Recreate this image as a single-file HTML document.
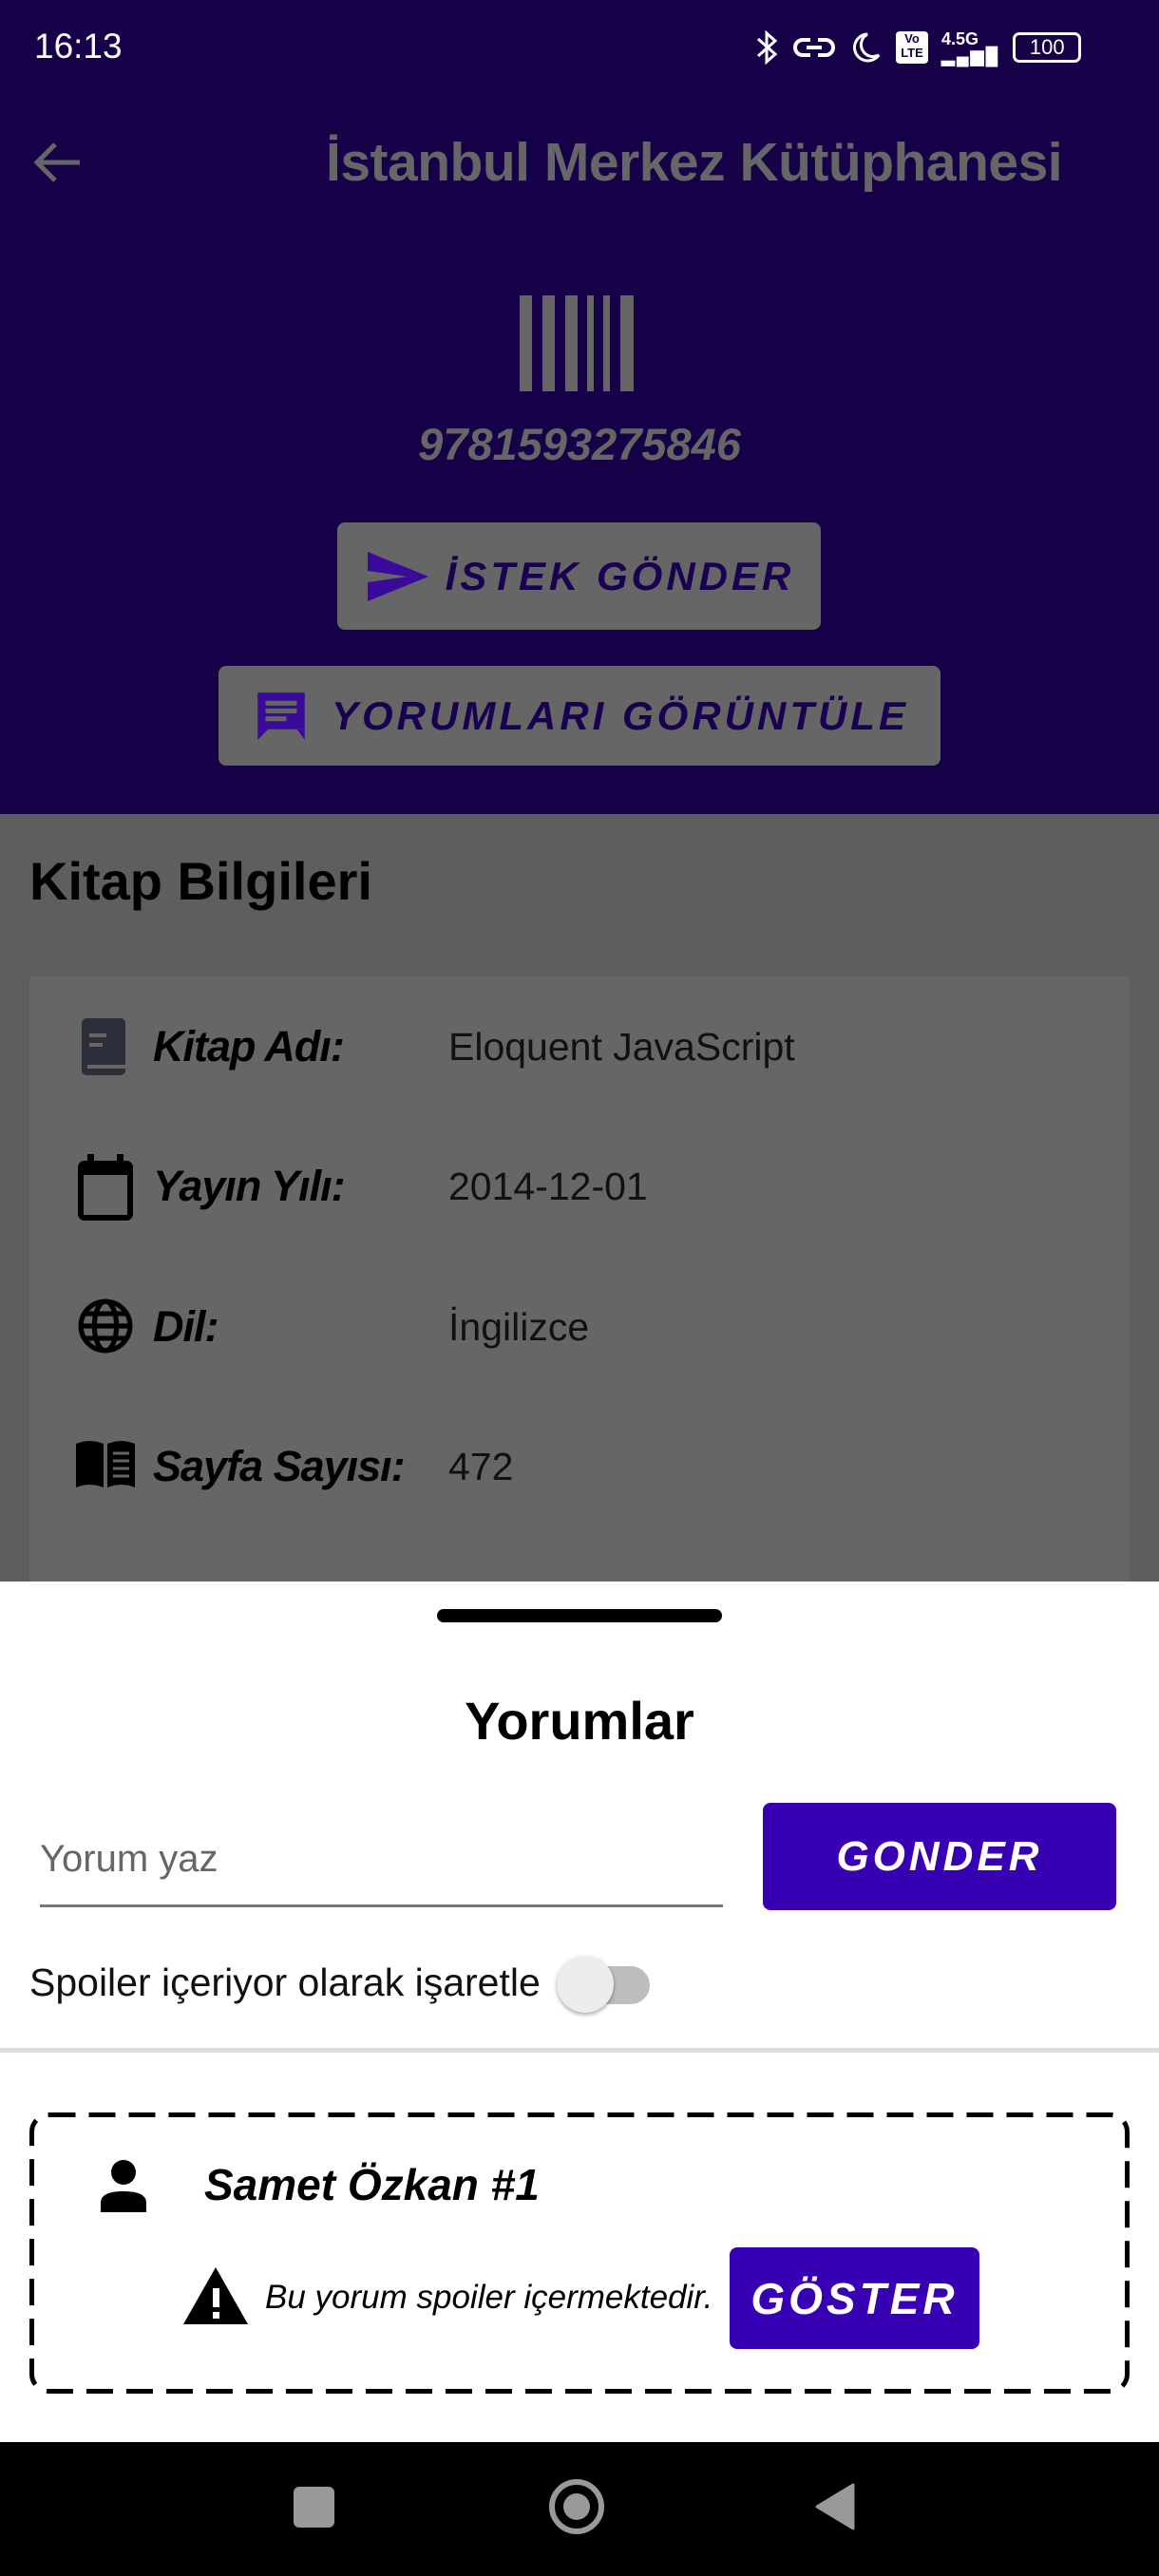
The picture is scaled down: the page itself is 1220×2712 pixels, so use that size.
<!DOCTYPE html>
<html><head><meta charset="utf-8"><style>
*{margin:0;padding:0;box-sizing:border-box}
body{width:1220px;height:2712px;position:relative;overflow:hidden;background:#fff;font-family:"Liberation Sans",sans-serif}
.a{position:absolute}
.top{left:0;top:0;width:1220px;height:857px;background:#160048}
.btn{background:#666;border-radius:8px;display:flex;align-items:center;justify-content:center;color:#1a0050;font-weight:bold;font-style:italic;letter-spacing:4px}
.row{left:80px;width:1000px;height:80px;display:flex;align-items:center}
.lbl{font-weight:bold;font-style:italic;font-size:45px;color:#000;position:absolute;left:81px;letter-spacing:-1px}
.val{font-size:41px;color:#111;position:absolute;left:392px}
.pb{background:#3700b3;border-radius:8px;color:#fff;font-weight:bold;font-style:italic;display:flex;align-items:center;justify-content:center;letter-spacing:4px}
</style></head><body>
<div class="a top"></div>
<div class="a" style="left:36px;top:28px;color:#fff;font-size:37px">16:13</div>
<div class="a" style="left:795px;top:30px;color:#fff;font-size:24px;display:flex;gap:14px;align-items:center">
<svg width="26" height="40" viewBox="0 0 26 40"><path d="M3 11 L21 27 L12 35 L12 5 L21 13 L3 29" stroke="#fff" stroke-width="3" fill="none"/></svg>
<svg width="44" height="36" viewBox="0 0 44 36"><path d="M18 10 h-8 a8 8 0 0 0 0 16 h8 M26 10 h8 a8 8 0 0 1 0 16 h-8 M14 18 h16" stroke="#fff" stroke-width="4" fill="none"/></svg>
<svg width="36" height="36" viewBox="0 0 36 36"><path d="M20 4 a14 14 0 1 0 12 22 a12 12 0 0 1 -12 -22z" stroke="#fff" stroke-width="3" fill="none"/></svg>
<div style="width:34px;height:34px;background:#fff;border-radius:4px;color:#160048;font-size:13px;font-weight:bold;line-height:15px;text-align:center">Vo<br>LTE</div>
<div style="font-size:18px;font-weight:bold;line-height:18px">4.5G<br><span style="letter-spacing:2px">▂▄▆█</span></div>
<div style="width:72px;height:32px;border:3px solid #fff;border-radius:7px;font-size:22px;text-align:center;line-height:26px">100</div>
</div>
<svg class="a" style="left:34px;top:146px" width="54" height="50" viewBox="0 0 54 50"><path d="M50 25 H6 M24 6 L5 25 L24 44" stroke="#666" stroke-width="5" fill="none"/></svg>
<div class="a" style="left:343px;top:138px;font-size:57px;font-weight:bold;color:#666;letter-spacing:-0.5px">İstanbul Merkez Kütüphanesi</div>
<svg class="a" style="left:547px;top:311px" width="126" height="101"><g fill="#666"><rect x="0" y="0" width="13" height="101"/><rect x="24" y="0" width="13" height="101"/><rect x="48" y="0" width="13" height="101"/><rect x="71" y="0" width="7" height="101"/><rect x="88" y="0" width="7" height="101"/><rect x="106" y="0" width="14" height="101"/></g></svg>
<div class="a" style="left:0;width:1220px;text-align:center;top:440px;font-size:47px;font-weight:bold;font-style:italic;color:#666">9781593275846</div>
<div class="a btn" style="left:355px;top:550px;width:509px;height:113px;font-size:42px">
<svg width="72" height="60" viewBox="0 0 72 60" style="margin-right:14px"><path d="M4 4 L68 30 L4 56 L4 36 L46 30 L4 24Z" fill="#3a0a9a"/></svg>İSTEK GÖNDER</div>
<div class="a btn" style="left:230px;top:701px;width:760px;height:105px;font-size:42px">
<svg width="66" height="66" viewBox="0 0 24 24" style="margin-right:20px"><path d="M3 3 H21 V17 H7 L3 21Z" fill="#3a0a9a"/><path d="M6 7 H18 M6 10 H18 M6 13 H14" stroke="#666" stroke-width="1.8"/><path d="M18 17 L21 21 V17" fill="#3a0a9a"/></svg>YORUMLARI GÖRÜNTÜLE</div>
<div class="a" style="left:0;top:857px;width:1220px;height:808px;background:#5e5e5e"></div>
<div class="a" style="left:31px;top:895px;font-size:56px;font-weight:bold;color:#000">Kitap Bilgileri</div>
<div class="a" style="left:31px;top:1028px;width:1158px;height:637px;background:#666"></div>
<div class="a row" style="top:1062px">
<svg class="a" style="left:6px;top:10px" width="46" height="60" viewBox="0 0 46 60"><rect x="0" y="0" width="46" height="60" rx="5" fill="#2c2f3a"/><rect x="8" y="16" width="18" height="4" fill="#666"/><rect x="8" y="26" width="14" height="4" fill="#666"/><rect x="6" y="49" width="40" height="4" fill="#666"/></svg>
<span class="lbl">Kitap Adı:</span><span class="val">Eloquent JavaScript</span></div>
<div class="a row" style="top:1209px">
<svg class="a" style="left:2px;top:4px" width="58" height="72" viewBox="0 0 58 72"><rect x="3" y="12" width="52" height="57" rx="4" stroke="#000" stroke-width="6" fill="none"/><rect x="3" y="12" width="52" height="12" fill="#000"/><rect x="10" y="2" width="7" height="14" fill="#000"/><rect x="41" y="2" width="7" height="14" fill="#000"/></svg>
<span class="lbl">Yayın Yılı:</span><span class="val">2014-12-01</span></div>
<div class="a row" style="top:1357px">
<svg class="a" style="left:0px;top:8px" width="62" height="62" viewBox="0 0 24 24"><circle cx="12" cy="12" r="10" stroke="#000" stroke-width="2" fill="none"/><ellipse cx="12" cy="12" rx="4.5" ry="10" stroke="#000" stroke-width="2" fill="none"/><path d="M2 12 H22 M3.5 7 H20.5 M3.5 17 H20.5" stroke="#000" stroke-width="2"/></svg>
<span class="lbl">Dil:</span><span class="val">İngilizce</span></div>
<div class="a row" style="top:1504px">
<svg class="a" style="left:-2px;top:10px" width="66" height="56" viewBox="0 0 66 56"><path d="M2 6 Q16 0 31 6 V52 Q16 46 2 52Z M35 6 Q50 0 64 6 V52 Q50 46 35 52Z" fill="#000"/><path d="M41 16 H58 M41 24 H58 M41 32 H58 M41 40 H58" stroke="#666" stroke-width="3"/></svg>
<span class="lbl">Sayfa Sayısı:</span><span class="val">472</span></div>
<div class="a" style="left:460px;top:1694px;width:300px;height:14px;background:#000;border-radius:7px"></div>
<div class="a" style="left:0;width:1220px;text-align:center;top:1779px;font-size:56px;font-weight:bold;color:#000">Yorumlar</div>
<div class="a" style="left:42px;top:1935px;font-size:40px;color:#666">Yorum yaz</div>
<div class="a" style="left:42px;top:2005px;width:719px;height:3px;background:#777"></div>
<div class="a pb" style="left:803px;top:1898px;width:372px;height:113px;font-size:44px">GONDER</div>
<div class="a" style="left:31px;top:2064px;font-size:41px;color:#111">Spoiler içeriyor olarak işaretle</div>
<div class="a" style="left:610px;top:2070px;width:74px;height:40px;border-radius:20px;background:#bdbdbd"></div>
<div class="a" style="left:586px;top:2059px;width:60px;height:60px;border-radius:30px;background:#ececec;box-shadow:0 2px 4px rgba(0,0,0,.35)"></div>
<div class="a" style="left:0;top:2156px;width:1220px;height:5px;background:#ddd"></div>
<svg class="a" style="left:31px;top:2224px" width="1158" height="296"><rect x="2.5" y="2.5" width="1153" height="291" rx="18" fill="none" stroke="#000" stroke-width="5" stroke-dasharray="28 14"/></svg>
<svg class="a" style="left:104px;top:2273px" width="52" height="56" viewBox="0 0 52 56"><circle cx="26" cy="14" r="13" fill="#000"/><path d="M2 56 V46 Q2 34 26 34 Q50 34 50 46 V56Z" fill="#000"/></svg>
<div class="a" style="left:215px;top:2273px;font-size:46px;font-weight:bold;font-style:italic;color:#000">Samet Özkan #1</div>
<svg class="a" style="left:192px;top:2385px" width="70" height="64" viewBox="0 0 70 64"><path d="M35 2 L69 62 H1Z" fill="#000"/><rect x="32" y="24" width="7" height="20" fill="#fff"/><rect x="32" y="49" width="7" height="7" fill="#fff"/></svg>
<div class="a" style="left:279px;top:2399px;font-size:35px;font-style:italic;color:#000">Bu yorum spoiler içermektedir.</div>
<div class="a pb" style="left:768px;top:2366px;width:263px;height:107px;font-size:46px">GÖSTER</div>
<div class="a" style="left:0;top:2571px;width:1220px;height:141px;background:#000"></div>
<div class="a" style="left:309px;top:2618px;width:43px;height:43px;background:#999;border-radius:6px"></div>
<div class="a" style="left:578px;top:2610px;width:58px;height:58px;border:6px solid #999;border-radius:50%"></div>
<div class="a" style="left:593px;top:2625px;width:28px;height:28px;background:#999;border-radius:50%"></div>
<svg class="a" style="left:858px;top:2614px" width="44" height="50"><path d="M40 2 V48 L2 25Z" fill="#999" stroke="#999" stroke-width="3" stroke-linejoin="round"/></svg>
</body></html>
